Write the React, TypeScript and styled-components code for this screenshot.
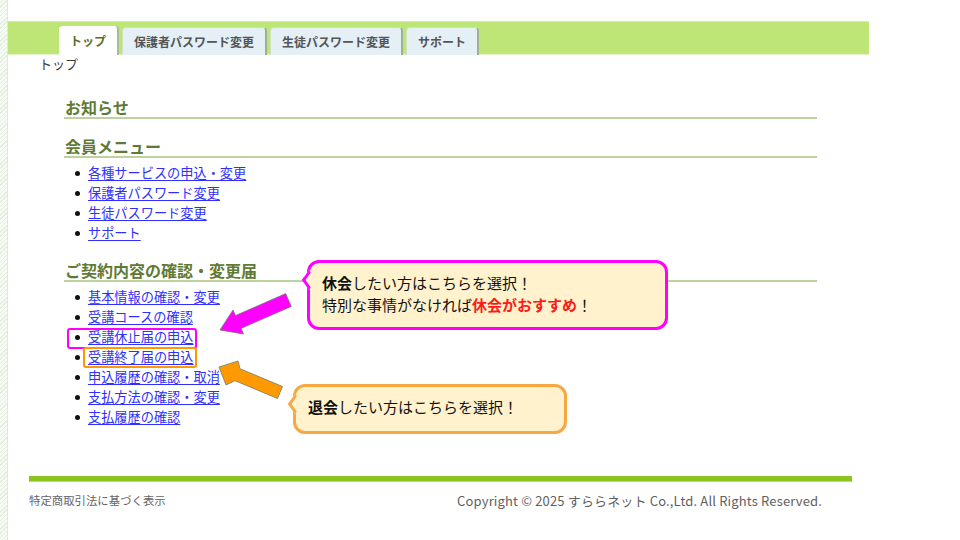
import React from "react";
import styled, { createGlobalStyle, css } from "styled-components";

const GlobalStyle = createGlobalStyle`
  html, body {
    margin: 0;
    padding: 0;
    background: #ffffff;
  }
  body {
    font-family: "Noto Sans CJK JP", "Noto Sans", sans-serif;
  }
`;

const Page = styled.div`
  position: relative;
  width: 960px;
  height: 540px;
  display: flex;
  overflow: hidden;
  background: #ffffff;
`;

const LeftStrip = styled.div`
  width: 7px;
  flex-shrink: 0;
  border-right: 1px solid #dcebd6;
  background: repeating-linear-gradient(
    -45deg,
    #e3efdc 0 1px,
    #f7fbf5 1px 3px
  );
`;

const Main = styled.div`
  flex: 1;
  display: flex;
  flex-direction: column;
  padding-top: 21px;
`;

const NavBar = styled.nav`
  height: 34px;
  width: 861px;
  box-sizing: border-box;
  background: #bee676;
  border-top: 1px solid #d2efa0;
  border-bottom: 1px solid #e2f4c8;
  padding-left: 51px;
  display: flex;
  align-items: flex-end;
  gap: 3px;
`;

const Tab = styled.div<{ $active?: boolean }>`
  height: 28px;
  box-sizing: border-box;
  padding: 0 11px;
  display: flex;
  align-items: center;
  font-size: 12px;
  font-weight: 700;
  border-radius: 4px 4px 0 0;
  margin-bottom: -1px;
  ${({ $active }) =>
    $active
      ? css`
          background: #ffffff;
          color: #5b6d28;
          border-right: 2px solid #a9bb96;
          height: 29px;
        `
      : css`
          background: #e4eff6;
          color: #555555;
          border: 1px solid #cfe0bd;
          border-right: 2px solid #9fb08f;
          border-bottom: none;
        `}
`;

const Breadcrumb = styled.div`
  padding-left: 31px;
  height: 18px;
  line-height: 18px;
  font-size: 13px;
  color: #3a3a3a;
`;

const Content = styled.div`
  margin-left: 56px;
  width: 753px;
`;

const Heading = styled.h2<{ $first?: boolean }>`
  margin: ${({ $first }) => ($first ? "24px" : "17px")} 0 0;
  padding-left: 1px;
  height: 20px;
  line-height: 20px;
  font-size: 16px;
  font-weight: 700;
  color: #5e7a34;
  border-bottom: 2px solid #bcd3a0;
`;

const MenuList = styled.ul`
  list-style: none;
  margin: 5px 0 0;
  padding: 0;
`;

const MenuItem = styled.li<{ $mark?: boolean }>`
  position: relative;
  display: flex;
  align-items: center;
  width: fit-content;
  height: 20px;
  padding-left: 11px;
  &::before {
    content: "";
    width: 5px;
    height: 5px;
    border-radius: 50%;
    background: #111111;
    margin-right: 8px;
  }
  ${({ $mark }) =>
    $mark &&
    css`
      &::after {
        content: "";
        position: absolute;
        left: 3px;
        right: -3px;
        top: 1px;
        bottom: -2px;
        border: 2px solid #f0f;
        border-radius: 3px;
        pointer-events: none;
      }
    `}
`;

const MenuLink = styled.a<{ $mark?: boolean }>`
  position: relative;
  font-size: 13.2px;
  line-height: 20px;
  color: #2f2fff;
  text-decoration: underline;
  text-underline-offset: 2px;
  cursor: pointer;
  ${({ $mark }) =>
    $mark &&
    css`
      &::after {
        content: "";
        position: absolute;
        left: -5px;
        right: -3px;
        top: 0px;
        bottom: -1px;
        border: 2px solid #ff9800;
        border-radius: 3px;
        pointer-events: none;
      }
    `}
`;

const FooterLine = styled.div`
  margin: 49px 0 0 21px;
  width: 823px;
  height: 5px;
  background: #8cc41f;
  border-bottom: 1px solid #b9dd74;
`;

const FooterRow = styled.div`
  margin: 10px 0 0 21px;
  width: 793px;
  display: flex;
  justify-content: space-between;
  align-items: center;
  height: 16px;
  color: #666666;
`;

const FooterLeft = styled.span`
  font-size: 11.4px;
`;

const Copyright = styled.span`
  font-size: 13px;
  letter-spacing: 0.15px;
  color: #5f5f5f;
`;

const Callout = styled.div<{ $color: string; $left: number; $top: number; $width: number; $height: number }>`
  position: absolute;
  left: ${({ $left }) => $left}px;
  top: ${({ $top }) => $top}px;
  width: ${({ $width }) => $width}px;
  height: ${({ $height }) => $height}px;
  box-sizing: border-box;
  background: #fff2cc;
  border: 3px solid ${({ $color }) => $color};
  border-radius: 12px;
  padding: 9px 12px;
  font-size: 15px;
  line-height: 22px;
  color: #111111;
  &::before {
    content: "";
    position: absolute;
    left: -7px;
    top: 11px;
    width: 9px;
    height: 9px;
    background: #fff2cc;
    border-left: 3px solid ${({ $color }) => $color};
    border-bottom: 3px solid ${({ $color }) => $color};
    transform: rotate(45deg) skew(10deg, 10deg);
  }
`;

const Strong = styled.b<{ $red?: boolean }>`
  font-weight: 700;
  color: ${({ $red }) => ($red ? "#ff1a1a" : "#111111")};
`;

const ArrowLayer = styled.svg`
  position: absolute;
  left: 0;
  top: 0;
  pointer-events: none;
`;

const tabs = ["トップ", "保護者パスワード変更", "生徒パスワード変更", "サポート"];

const memberMenu = ["各種サービスの申込・変更", "保護者パスワード変更", "生徒パスワード変更", "サポート"];

const contractMenu = [
  "基本情報の確認・変更",
  "受講コースの確認",
  "受講休止届の申込",
  "受講終了届の申込",
  "申込履歴の確認・取消",
  "支払方法の確認・変更",
  "支払履歴の確認",
];

const App = () => {
  return (
    <Page>
      <GlobalStyle />
      <LeftStrip />
      <Main>
        <NavBar>
          {tabs.map((t, i) => (
            <Tab key={t} $active={i === 0}>
              {t}
            </Tab>
          ))}
        </NavBar>
        <Breadcrumb>トップ</Breadcrumb>
        <Content>
          <Heading $first>お知らせ</Heading>
          <Heading>会員メニュー</Heading>
          <MenuList>
            {memberMenu.map((m) => (
              <MenuItem key={m}>
                <MenuLink>{m}</MenuLink>
              </MenuItem>
            ))}
          </MenuList>
          <Heading>ご契約内容の確認・変更届</Heading>
          <MenuList>
            {contractMenu.map((m, i) => (
              <MenuItem key={m} $mark={i === 2}>
                <MenuLink $mark={i === 3}>{m}</MenuLink>
              </MenuItem>
            ))}
          </MenuList>
        </Content>
        <FooterLine />
        <FooterRow>
          <FooterLeft>特定商取引法に基づく表示</FooterLeft>
          <Copyright>Copyright © 2025 すららネット Co.,Ltd. All Rights Reserved.</Copyright>
        </FooterRow>
      </Main>

      <ArrowLayer width="960" height="540" viewBox="0 0 960 540">
        <polygon
          points="220,330 233,310 235.5,315.6 285.7,293.6 291.3,306.4 241.1,328.4 243.5,334"
          fill="#ff00ff"
          stroke="#777777"
          strokeWidth="0.8"
        />
        <polygon
          points="219,367 238,361 240,368.7 282.5,386.5 277.5,398.5 235,380.7 226,385"
          fill="#ff9900"
          stroke="#777777"
          strokeWidth="0.8"
        />
      </ArrowLayer>

      <Callout $color="#ff00ff" $left={307} $top={260} $width={361} $height={70}>
        <Strong>休会</Strong>したい方はこちらを選択！
        <br />
        特別な事情がなければ<Strong $red>休会がおすすめ</Strong>！
      </Callout>
      <Callout $color="#f7a843" $left={293} $top={384} $width={274} $height={50}>
        <Strong>退会</Strong>したい方はこちらを選択！
      </Callout>
    </Page>
  );
};

export default App;
